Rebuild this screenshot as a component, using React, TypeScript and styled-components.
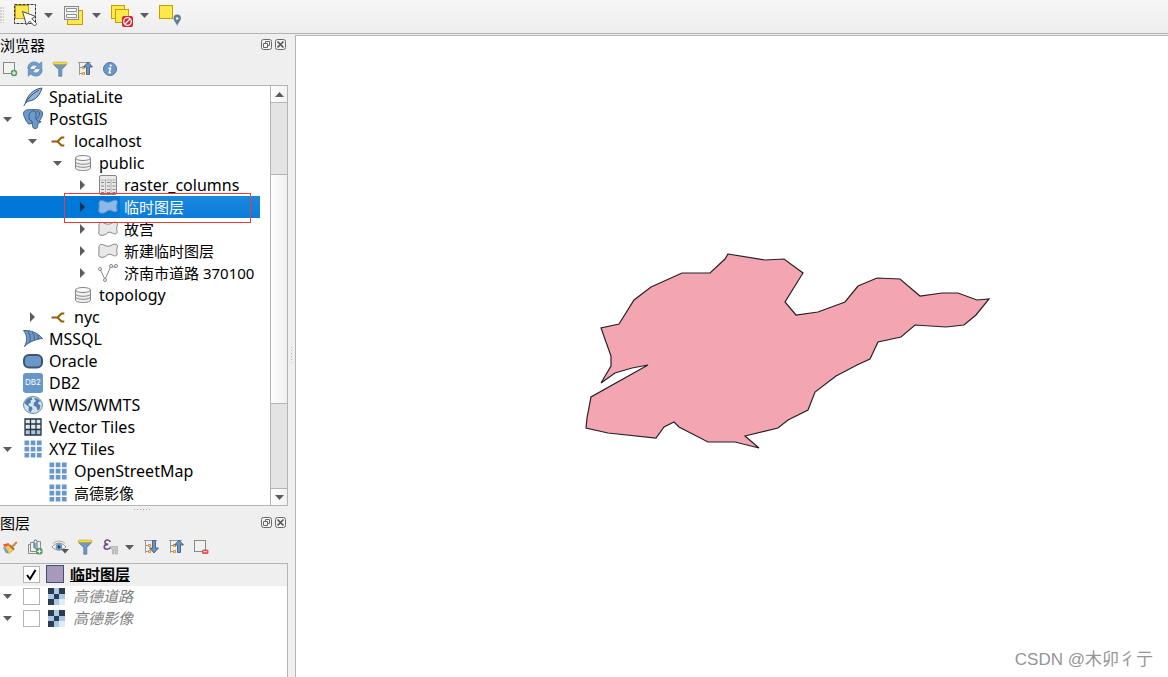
import React from "react";
import styled, { createGlobalStyle, css } from "styled-components";

const GlobalStyle = createGlobalStyle`
  *, *::before, *::after { box-sizing: border-box; }
  body {
    margin: 0;
    background: #efefef;
    color: #000;
    font: 15px/22px "Noto Sans", "Noto Sans CJK SC", sans-serif;
  }
  svg { display: block; flex: none; }
`;

const Page = styled.div`
  min-height: 100vh;
  display: flex;
  flex-direction: column;
  overflow: hidden;
`;

const MainToolbar = styled.div`
  height: 34px;
  display: flex;
  align-items: flex-start;
  padding: 3px 0 0 13px;
  border-bottom: 1px solid #b4b4b4;
  background: linear-gradient(#f6f6f6, #eeeeee);
  position: relative;
`;

const ToolbarHandle = styled.span`
  position: absolute;
  left: 0;
  top: 7px;
  width: 4px;
  height: 16px;
  background: radial-gradient(circle at 1px 1px, #d0d0d0 1px, transparent 1px) 0 0 / 3px 3px;
`;

const ToolButton = styled.button`
  display: flex;
  align-items: center;
  justify-content: center;
  padding: 0;
  border: 0;
  background: none;
`;

const MainTool = styled(ToolButton)`
  width: 24px;
  height: 24px;
`;

const MenuArrow = styled(ToolButton)`
  width: 24px;
  height: 24px;
  padding-right: 1px;
`;

const Workspace = styled.div`
  flex: 1;
  display: flex;
`;

const Sidebar = styled.aside`
  width: 288px;
  flex: none;
  display: flex;
  flex-direction: column;
`;

const Dock = styled.section<{ $fill?: boolean }>`
  display: flex;
  flex-direction: column;
  ${(p) => p.$fill && css`flex: 1;`}
`;

const DockTitle = styled.header`
  height: 21px;
  display: flex;
  align-items: center;
  gap: 3px;
  padding-right: 2px;
`;

const DockName = styled.h2`
  flex: 1;
  margin: 0;
  font-size: 15px;
  font-weight: 400;
  line-height: 22px;
`;

const DockTools = styled.div`
  height: 30px;
  display: flex;
  align-items: center;
  gap: 9px;
  padding: 0 0 2px 2px;
`;

const DockTool = styled(ToolButton)`
  width: 16px;
  height: 16px;
`;

const DropTool = styled(ToolButton)`
  width: 9px;
  height: 16px;
  margin-left: -2px;
`;

const TreeFrame = styled.div`
  display: flex;
  border: 1px solid #b4b4b4;
  border-left: 0;
  background: #fff;
  position: relative;
`;

const Tree = styled.ul`
  flex: 1;
  min-width: 0;
  margin: 0;
  padding: 0 10px 1px 0;
  list-style: none;
`;

const TreeRow = styled.li<{ $level: number; $selected?: boolean }>`
  height: 22px;
  display: flex;
  align-items: center;
  padding-left: ${(p) => p.$level * 25}px;
  white-space: nowrap;
  ${(p) => p.$selected && css`
    color: #fff;
    background: #0078d7;
  `}
`;

const Toggle = styled(ToolButton)`
  width: 15px;
  height: 20px;
  margin-right: 8px;
`;

const ToggleSpace = styled.span`
  width: 23px;
`;

const RowName = styled.span<{ $selected?: boolean; $latin: boolean }>`
  flex: 1;
  margin-left: 2px;
  padding-left: 4px;
  font-size: ${(p) => (p.$latin ? 16 : 15)}px;
  line-height: 22px;
  ${(p) => p.$selected && css`background: linear-gradient(#1c88df, #0a7cda);`}
`;

const Highlight = styled.div`
  position: absolute;
  left: 64px;
  top: 107px;
  width: 187px;
  height: 30px;
  border: 1px solid #f03a3a;
  pointer-events: none;
`;

const ScrollBar = styled.div`
  width: 17px;
  display: flex;
  flex-direction: column;
  border-left: 1px solid #b4b4b4;
  background: #e4e4e4;
`;

const ScrollButton = styled(ToolButton)`
  height: 16px;
  background: linear-gradient(90deg, #fff, #f1f1f1);
`;

const ScrollThumb = styled.div`
  flex: 229;
  border: solid #b4b4b4;
  border-width: 1px 0;
  background: linear-gradient(90deg, #fff, #f0f0f0);
`;

const ScrollGap = styled.div<{ $share: number; $edge: "top" | "bottom" }>`
  flex: ${(p) => p.$share};
  border: 0 solid #b4b4b4;
  border-${(p) => p.$edge}-width: 1px;
`;

const RowSplitter = styled.div`
  height: 6px;
  display: flex;
  justify-content: center;
  align-items: center;
  &::after {
    content: "";
    width: 17px;
    height: 1px;
    margin-right: 4px;
    background: repeating-linear-gradient(90deg, #aaa 0 1px, transparent 1px 3px);
  }
`;

const ColumnSplitter = styled.div`
  width: 7px;
  flex: none;
  display: flex;
  justify-content: center;
  align-items: center;
  &::after {
    content: "";
    width: 1px;
    height: 17px;
    background: repeating-linear-gradient(#bbb 0 1px, transparent 1px 3px);
  }
`;

const LayerFrame = styled.ul`
  flex: 1;
  margin: 0;
  padding: 0;
  list-style: none;
  border: solid #b4b4b4;
  border-width: 1px 1px 0 0;
  background: #fff;
`;

const LayerRow = styled.li<{ $active?: boolean }>`
  height: 22px;
  display: flex;
  align-items: center;
  padding-bottom: 2px;
  background: ${(p) => (p.$active ? "#efefef" : "#fff")};
`;

const CheckBox = styled.span<{ $active?: boolean }>`
  display: grid;
  width: 17px;
  height: 17px;
  margin-right: ${(p) => (p.$active ? 6 : 8)}px;
  place-items: center;
  > * { grid-area: 1 / 1; }
  svg { pointer-events: none; }
`;

const CheckInput = styled.input`
  appearance: none;
  width: 17px;
  height: 17px;
  margin: 0;
  border: 1px solid #b4b4b4;
  background: #fff;
`;

const LayerName = styled.label<{ $active?: boolean }>`
  margin-left: ${(p) => (p.$active ? 6 : 8)}px;
  ${(p) => p.$active
    ? css`font-weight: 700; text-decoration: underline;`
    : css`font-style: italic; color: #808080;`}
`;

const Canvas = styled.main`
  flex: 1;
  min-width: 0;
  display: flex;
  margin-top: 1px;
  border: solid #b4b4b4;
  border-width: 1px 0 0 1px;
  background: #fff;
  position: relative;
`;

const MapView = styled.svg`
  && { flex: 1; min-width: 0; }
`;

const Watermark = styled.span`
  position: absolute;
  right: 15px;
  bottom: 5px;
  color: #959595;
  font: 17px/24px "Liberation Sans", "Noto Sans CJK SC", sans-serif;
`;

const Down = () => (
  <svg width="9" height="5"><path d="M0 0h9L4.500 5z" fill="#5c5c5c" /></svg>
);
const Up = () => (
  <svg width="9" height="5"><path d="M0 5h9L4.500 0z" fill="#5c5c5c" /></svg>
);
const Right = ({ dark }: { dark?: boolean }) => (
  <svg width="5" height="10"><path d="M0 0v10l5-5z" fill={dark ? "#0a2f55" : "#5c5c5c"} /></svg>
);

const SelectIcon = () => (
  <svg width="24" height="24" viewBox="0 0 24 24">
    <rect x="1.500" y="1.500" width="21" height="19" fill="none" stroke="#333" strokeDasharray="3 1" />
    <rect x="2.500" y="2.500" width="13" height="13" fill="#ffe84a" stroke="#c4a000" />
    <path d="M9.500 8.500l4 13.500 3-4 5 5 2.300-2.300-5-5 3.700-2.300z" fill="#fff" stroke="#4a4a4a" />
  </svg>
);
const FormIcon = () => (
  <svg width="24" height="24" viewBox="0 0 24 24">
    <rect x="6.500" y="7.500" width="15" height="14" fill="#ffe84a" stroke="#c4a000" />
    <rect x="3.500" y="3.500" width="14" height="13" fill="#eef0f0" stroke="#888" />
    <path d="M5.500 5.500h10v3h-10zM5.500 11.500h10v3h-10z" fill="#fff" stroke="#8a9293" />
  </svg>
);
const DeselectIcon = () => (
  <svg width="24" height="24" viewBox="0 0 24 24">
    <rect x="2.500" y="2.500" width="13" height="13" fill="#ffe84a" stroke="#c4a000" />
    <rect x="6.500" y="6.500" width="13" height="13" fill="#ffe84a" stroke="#c4a000" />
    <rect x="13" y="13" width="11" height="11" rx="2" fill="#d9212c" />
    <circle cx="18.500" cy="18.500" r="3.800" fill="none" stroke="#fff" strokeWidth="1.300" />
    <path d="M16 21l5-5" stroke="#fff" strokeWidth="1.300" />
  </svg>
);
const PinIcon = () => (
  <svg width="24" height="24" viewBox="0 0 24 24">
    <rect x="2.500" y="2.500" width="13" height="13" fill="#ffe84a" stroke="#c4a000" />
    <path d="M20.200 23c-1-3.500-3.700-5-3.700-7.700a3.700 3.700 0 0 1 7.400 0c0 2.700-2.700 4.200-3.700 7.700z" fill="#5d7f93" />
    <circle cx="20.200" cy="15.500" r="1.300" fill="#fff" />
  </svg>
);

const AddLayerIcon = () => (
  <svg width="16" height="16" viewBox="0 0 16 16">
    <rect x="1.500" y="1.500" width="11" height="11" fill="#f2f2ee" stroke="#8a8a85" />
    <circle cx="12" cy="12" r="3.200" fill="#5b9a62" />
    <path d="M10 12h4M12 10v4" stroke="#fff" />
  </svg>
);
const RefreshIcon = () => (
  <svg width="16" height="16" viewBox="0 0 16 16">
    <path d="M.8 7.500C.8.500 8.500-.8 12.200 3L14.800.8V7.500H8l2.400-2.400C7.500 3 3.500 4.200 3.200 7.500z" fill="#6d9fd2" stroke="#47779f" strokeWidth=".6" />
    <path d="M15.200 8.500c0 7-7.700 8.300-11.400 4.500L1.200 15.200V8.500H8l-2.400 2.400c2.900 2.100 6.900.9 7.200-2.400z" fill="#6d9fd2" stroke="#47779f" strokeWidth=".6" />
  </svg>
);
const FilterIcon = () => (
  <svg width="16" height="16" viewBox="0 0 16 16">
    <path d="M1.500 3.500h13l-4.700 5v6.700h-3V8.500z" fill="#7298bd" stroke="#54799f" strokeWidth=".8" />
    <rect x="1" y="1" width="14" height="2.500" rx="1" fill="#f3dc3f" stroke="#b59c2c" strokeWidth=".5" />
  </svg>
);
const TreeArrowIcon = ({ down }: { down?: boolean }) => (
  <svg width="16" height="16" viewBox="0 0 16 16">
    <path d="M1 1.500h13M2.500 2v12M2.500 6.500H5M2.500 12.500H5" stroke="#999" fill="none" />
    <path d="M5.500 5.500h2v2h-2zM5.500 11.500h2v2h-2z" fill="#ffe0b0" stroke="#f08c1e" />
    <path
      d={down ? "M9.500 1.500h3v7.500h3L11 14 6.500 9h3z" : "M11 1l4.500 5h-3v7.500h-3V6h-3z"}
      fill="#6793c5"
      stroke="#34557c"
      strokeWidth=".8"
    />
  </svg>
);
const InfoIcon = () => (
  <svg width="16" height="16" viewBox="0 0 16 16">
    <circle cx="8" cy="8" r="6.500" fill="#6b97c7" stroke="#4c76a5" />
    <circle cx="8.800" cy="4.500" r="1.100" fill="#fff" />
    <path d="M6.500 7.200h2L7.200 11.700h1.800" fill="none" stroke="#fff" strokeWidth="1.400" />
  </svg>
);
const StyleIcon = () => (
  <svg width="16" height="16" viewBox="0 0 16 16">
    <path d="M1 5.500l5.500-1.500 1.500 3-5 2z" fill="#e8574b" />
    <path d="M.8 8l4 1 2 5.500-3-.5z" fill="#6f9bd0" />
    <path d="M2.500 8l5-2 4.500 4.500-5 4c-1-3-2-4.500-4.500-6.500z" fill="#f6cc52" stroke="#d39a33" strokeWidth=".6" />
    <path d="M7.500 6l4.500 4.500" stroke="#a9652c" strokeWidth="1.800" />
    <path d="M10 8l4.800-5" stroke="#c58b4c" strokeWidth="2.200" />
  </svg>
);
const GroupIcon = () => (
  <svg width="16" height="16" viewBox="0 0 16 16">
    <path d="M3.500 5.500h-2v9h9" fill="none" stroke="#8c8c88" />
    <path d="M6.500 3.500h-3v9h7" fill="none" stroke="#8c8c88" />
    <path d="M10.500 2.500h3v8" fill="none" stroke="#8c8c88" />
    <path d="M7 9V2.500a1.500 1.500 0 0 1 3 0V9a1 1 0 0 1-2 0V4" fill="none" stroke="#3e6a86" />
    <rect x="9" y="9" width="6.500" height="6.500" rx="2" fill="#5b9a62" />
    <path d="M10.300 12.300h4M12.300 10.300v4" stroke="#fff" />
  </svg>
);
const EyeIcon = () => (
  <svg width="18" height="16" viewBox="0 0 18 16">
    <path d="M1 8c4-5 10-5 14 0-4 4-10 4-14 0z" fill="#fff" stroke="#8b8b8b" />
    <path d="M2 4.500c4-3.500 9-3 12 0" stroke="#aaa" fill="none" />
    <circle cx="8" cy="8" r="3.400" fill="#709dc4" />
    <circle cx="8" cy="8" r="1.400" fill="#25435d" />
    <path d="M10 10h8l-4 4.500z" fill="#555" />
  </svg>
);
const EpsilonIcon = () => (
  <svg width="16" height="16" viewBox="0 0 16 16">
    <path d="M8.300 3C7.500.3 3 .3 3 3.200c0 1.600 1.200 2.200 3.200 2.200C3.600 5.400 2.200 6.200 2.200 8c0 3 5 3 6.600.2" fill="none" stroke="#75497e" strokeWidth="1.600" />
    <path d="M8.500 7.500h7v7.500h-2v-4h-1.500v4h-1.500v-4.500l-2-1z" fill="#c8c8c8" stroke="#a2a2a2" strokeWidth=".6" />
  </svg>
);
const RemoveIcon = () => (
  <svg width="16" height="16" viewBox="0 0 16 16">
    <rect x="1.500" y="1.500" width="11" height="11" fill="#f2f2f0" stroke="#8a8a85" />
    <rect x="9" y="10.500" width="6.500" height="4.500" rx="1.500" fill="#ee4b51" />
    <path d="M10.500 12.700h3.500" stroke="#fff" />
  </svg>
);

const FloatIcon = () => (
  <svg width="11" height="11" viewBox="0 0 11 11">
    <rect x=".5" y=".5" width="10" height="10" rx="2" fill="#f4f4f4" stroke="#686868" />
    <path d="M4.500 4.500v-2h4v4h-2M2.500 4.500h4v4h-4z" fill="none" stroke="#686868" />
  </svg>
);
const CloseIcon = () => (
  <svg width="11" height="11" viewBox="0 0 11 11">
    <rect x=".5" y=".5" width="10" height="10" rx="2" fill="#f4f4f4" stroke="#686868" />
    <path d="M2.500 2.500l6 6M8.500 2.500l-6 6" stroke="#555" strokeWidth="1.700" />
  </svg>
);

const FeatherIcon = () => (
  <svg width="20" height="20" viewBox="0 0 20 20">
    <path d="M2.500 16C4 9 10 2 19 1c-1.500 5-4 9-8 11.500-3 1.500-6 1-8.500 3.500z" fill="#8fb6de" stroke="#3d5570" />
    <path d="M.8 19C4 12 9 7 16 3" fill="none" stroke="#3d5570" />
  </svg>
);
const ElephantIcon = () => (
  <svg width="20" height="20" viewBox="0 0 20 20">
    <path d="M4 1C8-.3 10 .8 12 .7c3-.5 7 .2 7.500 3.300.4 3-1.500 6-3.500 8.500h2c-.5 1.500-2 1.500-3 1.500-.3 4 0 5.500-3 5.500-2.500 0-2.500-2-2.700-5.500-2 1.500-4.300 1.500-5-.5C2 10 .5 7 .5 4.500.5 2.500 2 1.300 4 1z" fill="#6c9ac9" stroke="#34577c" strokeWidth=".9" />
    <path d="M7.500 3c-2 2-1 4-1.500 6 0 2 1.500 2.500 3 3V14M8 3c2-2 5-1 5 2 0 2-.5 4 0 5 .5 1 1.500 2 2.500 2.500M13 3c2-1 4 0 3.500 2-.2 2-1.500 4-3.500 5" fill="none" stroke="#34577c" strokeWidth=".9" />
  </svg>
);
const ConnectionIcon = () => (
  <svg width="20" height="20" viewBox="0 0 20 20">
    <path d="M3.500 10.500h6M16.300 6.500h-2.800L9.500 10.500l4 4h2.800" fill="none" stroke="#935e0a" strokeWidth="2" />
  </svg>
);
const SchemaIcon = () => (
  <svg width="20" height="20" viewBox="0 0 20 20">
    <path d="M2.500 5v10c0 1.600 3.500 2.500 7.500 2.500s7.500-.9 7.500-2.500V5" fill="#f1f1f1" stroke="#858585" />
    <ellipse cx="10" cy="5" rx="7.500" ry="2.500" fill="#f8f8f8" stroke="#858585" />
    <path d="M2.500 9c0 3 15 3 15 0M2.500 12c0 3 15 3 15 0" fill="none" stroke="#858585" />
  </svg>
);
const TableIcon = () => (
  <svg width="20" height="20" viewBox="0 0 20 20">
    <rect x="1.500" y=".5" width="17" height="19" rx="1.500" fill="#e9e9e9" stroke="#858585" />
    <path d="M1.500 5h17M7.500 5v14.500M13 5v14.500" stroke="#b0b0b0" />
    <path d="M3 7.500h3M9 7.500h3M14.500 7.500h3M3 11h3M9 11h3M14.500 11h3M3 14.500h3M9 14.500h3M14.500 14.500h3M3 17.500h3M9 17.500h3M14.500 17.500h3" stroke="#858585" />
  </svg>
);
const PolygonIcon = ({ selected }: { selected?: boolean }) => (
  <svg width="20" height="20" viewBox="0 0 20 20">
    <path d="M2.500 3.500C5 2.500 7 5.500 10.500 5.200 13.500 5 15 2.500 18 3.200c2 .5 1.500 2.300 1 4-.5 2-.2 4 .2 6-.5 2.300-3 2-5 .8-2.500-1.500-4-.8-5.700.7-2 1.700-5 2.300-7.200.8C0 14 1.300 11.500 1 9 .8 7 .5 4.500 2.500 3.500z" fill={selected ? "#8ab9e8" : "#e8e8e8"} stroke={selected ? "#5c8bb8" : "#858585"} />
  </svg>
);
const LineIcon = () => (
  <svg width="20" height="20" viewBox="0 0 20 20">
    <path d="M2 6l5 10.500L12.500 4h5" fill="none" stroke="#858585" />
    <g fill="#fff" stroke="#858585">
      <circle cx="2" cy="6" r="1.500" /><circle cx="7" cy="17" r="1.500" />
      <circle cx="13" cy="3" r="1.500" /><circle cx="18" cy="3" r="1.500" />
    </g>
  </svg>
);
const MssqlIcon = () => (
  <svg width="20" height="20" viewBox="0 0 20 20">
    <path d="M.5 1.500C8 1 15 4 19.500 9.500 14 10 7 12 1.500 17.500 5 11 4 6 .5 1.500z" fill="#6c98c8" stroke="#3f5f82" />
    <path d="M5 2.500c2.500 4 3 7 1.500 11M9.500 3.500c2 3 2.500 5 1.500 8M14 5.500c1.500 2 1.500 3 1 4.500" fill="none" stroke="#3f5f82" />
  </svg>
);
const OracleIcon = () => (
  <svg width="20" height="20" viewBox="0 0 20 20">
    <rect x="1" y="4" width="18" height="12.500" rx="5" fill="#6c98c8" stroke="#3a5574" strokeWidth="2" />
  </svg>
);
const Db2Icon = () => (
  <svg width="20" height="20" viewBox="0 0 20 20">
    <rect width="20" height="20" rx="3" fill="#6797c9" />
    <text x="10" y="12" textAnchor="middle" fontFamily="Inter" fontSize="8" fill="#fff">DB2</text>
  </svg>
);
const GlobeIcon = () => (
  <svg width="20" height="20" viewBox="0 0 20 20">
    <ellipse cx="10" cy="10" rx="9.500" ry="8.500" fill="#d5e2ef" stroke="#6c88a6" />
    <path d="M1.500 8c1-3 4-5.500 7-5.500l1 2-2 1 .5 2-2.500 1.500.5 3-2-1.500zM11 3c3 0 5.500 1.500 7 4l-2-.5-1 2 2.500 2-1 4-2 1-1-3.500-3-1.500.5-3 2-1.500zM6 11l3 1 .5 2-2 3.500-2-2z" fill="#4f7fae" />
  </svg>
);
const VectorTilesIcon = () => (
  <svg width="20" height="20" viewBox="0 0 20 20">
    <rect x="2" y="2" width="16" height="16" fill="#dfe9f1" />
    <path d="M2 12h5v6H2zM7 12h11v6H7z" fill="#a9c5e2" />
    <path d="M2 2h16v16H2zM2 7h16M2 12.500h16M7.500 2v16M13 2v16" fill="none" stroke="#26333d" strokeWidth="1.300" />
  </svg>
);
const XyzIcon = () => (
  <svg width="20" height="20" viewBox="0 0 20 20">
    <path d="M1.500 1.500h4.700v4.700H1.500zM7.700 1.500h4.700v4.700H7.700zM13.900 1.500h4.700v4.700h-4.700zM1.500 7.700h4.700v4.700H1.500zM7.700 7.700h4.700v4.700H7.700zM13.900 7.700h4.700v4.700h-4.700zM1.500 13.900h4.700v4.700H1.500zM7.700 13.900h4.700v4.700H7.700zM13.900 13.900h4.700v4.700h-4.700z" fill="#6a97c9" />
  </svg>
);

const FillSwatch = () => (
  <svg width="18" height="18"><rect x=".5" y=".5" width="17" height="17" fill="#a998be" stroke="#3d5173" /></svg>
);
const RasterIcon = () => (
  <svg width="17" height="17" viewBox="0 0 17 17">
    <path d="M0 0h17v17H0z" fill="#e3ebf5" />
    <path d="M6 0h5v6H6zM0 6h6v5H0zM11 6h6v5h-6zM6 11h5v6H6z" fill="#abc7e6" />
    <path d="M0 0h6v6H0zM11 0h6v6h-6zM6 6h5v5H6zM0 11h6v6H0z" fill="#2c3c50" />
  </svg>
);

type Node = { name: string; level: number; icon: React.ReactNode; open?: boolean; selected?: boolean };

const nodes: Node[] = [
  { name: "SpatiaLite", level: 0, icon: <FeatherIcon /> },
  { name: "PostGIS", level: 0, icon: <ElephantIcon />, open: true },
  { name: "localhost", level: 1, icon: <ConnectionIcon />, open: true },
  { name: "public", level: 2, icon: <SchemaIcon />, open: true },
  { name: "raster_columns", level: 3, icon: <TableIcon />, open: false },
  { name: "临时图层", level: 3, icon: <PolygonIcon selected />, open: false, selected: true },
  { name: "故宫", level: 3, icon: <PolygonIcon />, open: false },
  { name: "新建临时图层", level: 3, icon: <PolygonIcon />, open: false },
  { name: "济南市道路 370100", level: 3, icon: <LineIcon />, open: false },
  { name: "topology", level: 2, icon: <SchemaIcon /> },
  { name: "nyc", level: 1, icon: <ConnectionIcon />, open: false },
  { name: "MSSQL", level: 0, icon: <MssqlIcon /> },
  { name: "Oracle", level: 0, icon: <OracleIcon /> },
  { name: "DB2", level: 0, icon: <Db2Icon /> },
  { name: "WMS/WMTS", level: 0, icon: <GlobeIcon /> },
  { name: "Vector Tiles", level: 0, icon: <VectorTilesIcon /> },
  { name: "XYZ Tiles", level: 0, icon: <XyzIcon />, open: true },
  { name: "OpenStreetMap", level: 1, icon: <XyzIcon /> },
  { name: "高德影像", level: 1, icon: <XyzIcon /> },
];

const isLatin = (name: string) => /^[\x20-\x7e]+$/.test(name);

const layers = [
  { id: "layer-temp", name: "临时图层", active: true },
  { id: "layer-road", name: "高德道路", active: false },
  { id: "layer-image", name: "高德影像", active: false },
];

const mainTools = [
  { label: "选择要素", icon: <SelectIcon />, menu: true },
  { label: "按值选择", icon: <FormIcon />, menu: true },
  { label: "取消选择", icon: <DeselectIcon />, menu: true },
  { label: "按位置选择", icon: <PinIcon />, menu: false },
];

const browserTools = [
  { label: "添加图层", icon: <AddLayerIcon /> },
  { label: "刷新", icon: <RefreshIcon /> },
  { label: "过滤", icon: <FilterIcon /> },
  { label: "全部折叠", icon: <TreeArrowIcon /> },
  { label: "属性", icon: <InfoIcon /> },
];

const DockHeader = ({ name }: { name: string }) => (
  <DockTitle>
    <DockName>{name}</DockName>
    <ToolButton aria-label="浮动"><FloatIcon /></ToolButton>
    <ToolButton aria-label="关闭"><CloseIcon /></ToolButton>
  </DockTitle>
);

export default function App() {
  return (
    <Page>
      <GlobalStyle />
      <MainToolbar role="toolbar">
        <ToolbarHandle />
        {mainTools.map((t) => (
          <React.Fragment key={t.label}>
            <MainTool aria-label={t.label}>{t.icon}</MainTool>
            {t.menu && <MenuArrow aria-label={`${t.label}菜单`}><Down /></MenuArrow>}
          </React.Fragment>
        ))}
      </MainToolbar>
      <Workspace>
        <Sidebar>
          <Dock>
            <DockHeader name="浏览器" />
            <DockTools role="toolbar">
              {browserTools.map((t) => (
                <DockTool key={t.label} aria-label={t.label}>{t.icon}</DockTool>
              ))}
            </DockTools>
            <TreeFrame>
              <Tree role="tree">
                {nodes.map((n, i) => (
                  <TreeRow key={i} role="treeitem" $level={n.level} $selected={n.selected}>
                    {n.open === undefined
                      ? <ToggleSpace />
                      : <Toggle aria-label={n.open ? "折叠" : "展开"}>{n.open ? <Down /> : <Right dark={n.selected} />}</Toggle>}
                    {n.icon}
                    <RowName $selected={n.selected} $latin={isLatin(n.name)}>{n.name}</RowName>
                  </TreeRow>
                ))}
              </Tree>
              <ScrollBar>
                <ScrollButton aria-label="向上滚动"><Up /></ScrollButton>
                <ScrollGap $share={71} $edge="top" />
                <ScrollThumb />
                <ScrollGap $share={84} $edge="bottom" />
                <ScrollButton aria-label="向下滚动"><Down /></ScrollButton>
              </ScrollBar>
              <Highlight />
            </TreeFrame>
          </Dock>
          <RowSplitter />
          <Dock $fill>
            <DockHeader name="图层" />
            <DockTools role="toolbar">
              <DockTool aria-label="图层样式"><StyleIcon /></DockTool>
              <DockTool aria-label="添加组"><GroupIcon /></DockTool>
              <DockTool aria-label="地图主题"><EyeIcon /></DockTool>
              <DockTool aria-label="过滤图例"><FilterIcon /></DockTool>
              <DockTool aria-label="表达式过滤"><EpsilonIcon /></DockTool>
              <DropTool aria-label="表达式菜单"><Down /></DropTool>
              <DockTool aria-label="全部展开"><TreeArrowIcon down /></DockTool>
              <DockTool aria-label="全部折叠"><TreeArrowIcon /></DockTool>
              <DockTool aria-label="移除图层"><RemoveIcon /></DockTool>
            </DockTools>
            <LayerFrame>
              {layers.map((l) => (
                <LayerRow key={l.id} $active={l.active}>
                  {l.active ? <ToggleSpace /> : <Toggle aria-label="折叠"><Down /></Toggle>}
                  <CheckBox $active={l.active}>
                    <CheckInput type="checkbox" id={l.id} defaultChecked={l.active} />
                    {l.active && (
                      <svg width="13" height="13" viewBox="0 0 13 13">
                        <path d="M2 7l3 4 5.500-9" fill="none" stroke="#000" strokeWidth="2" />
                      </svg>
                    )}
                  </CheckBox>
                  {l.active ? <FillSwatch /> : <RasterIcon />}
                  <LayerName htmlFor={l.id} $active={l.active}>{l.name}</LayerName>
                </LayerRow>
              ))}
            </LayerFrame>
          </Dock>
        </Sidebar>
        <ColumnSplitter />
        <Canvas>
          <MapView viewBox="296 36 872 641" role="img" aria-label="临时图层">
            <polygon
              points="728,254 765,260 784,259 803,273 785,302 796,315 818,312 845,302 858,286 877,278 900,279 920,296 942,293 958,293 977,300 989,299 976,315 964,325 946,327 915,325 901,337 878,342 870,359 857,365 836,376 815,392 808,410 788,420 778,428 745,436 759,448 735,442 708,442 679,427 674,422 664,427 656,438 608,433 586,428 587,418 591,397 648,365 632,368 615,373 601,383 611,366 611,356 601,328 619,324 634,300 651,287 682,273 710,273 725,259"
              fill="#f3a6b2"
              stroke="#232323"
              strokeWidth="1.200"
            />
          </MapView>
          <Watermark>CSDN @木卯彳亍</Watermark>
        </Canvas>
      </Workspace>
    </Page>
  );
}
